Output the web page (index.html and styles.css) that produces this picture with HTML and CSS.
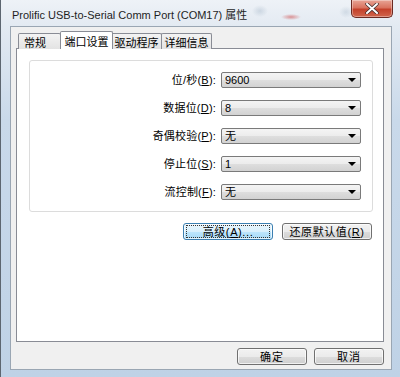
FILE: index.html
```html
<!DOCTYPE html>
<html>
<head>
<meta charset="utf-8">
<link rel="stylesheet" href="styles.css">
</head>
<body>
<div class="window">
  <div class="titlebar">
    <div class="title">Prolific USB-to-Serial Comm Port (COM17) 属性</div>
    <div class="close">
      <svg width="14" height="11" viewBox="0 0 14 11"><path d="M2 1 L12 10 M12 1 L2 10" stroke="#3a2a2a" stroke-width="3.4" stroke-linecap="round"/><path d="M2 1 L12 10 M12 1 L2 10" stroke="#ffffff" stroke-width="2" stroke-linecap="round"/></svg>
    </div>
  </div>
  <div class="client">
    <div class="tabs">
      <div class="tab first">常规</div>
      <div class="tab selected">端口设置</div>
      <div class="tab">驱动程序</div>
      <div class="tab">详细信息</div>
    </div>
    <div class="panel">
      <div class="group">
        <div class="row"><span class="label">位/秒(<u>B</u>):</span><div class="combo"><span>9600</span><i class="arrow"></i></div></div>
        <div class="row"><span class="label">数据位(<u>D</u>):</span><div class="combo"><span>8</span><i class="arrow"></i></div></div>
        <div class="row"><span class="label">奇偶校验(<u>P</u>):</span><div class="combo"><span>无</span><i class="arrow"></i></div></div>
        <div class="row"><span class="label">停止位(<u>S</u>):</span><div class="combo"><span>1</span><i class="arrow"></i></div></div>
        <div class="row"><span class="label">流控制(<u>F</u>):</span><div class="combo"><span>无</span><i class="arrow"></i></div></div>
      </div>
      <div class="actions">
        <div class="btn focus"><span class="focusrect">高级(<u>A</u>)...</span></div>
        <div class="btn">还原默认值(<u>R</u>)</div>
      </div>
    </div>
    <div class="footer">
      <div class="btn small">确定</div>
      <div class="btn small">取消</div>
    </div>
  </div>
</div>
</body>
</html>
```
FILE: styles.css
```css
* { box-sizing: border-box; }
html, body { margin: 0; padding: 0; }
body {
  width: 400px;
  height: 377px;
  overflow: hidden;
  background: #ffffff;
  font-family: "Liberation Sans", "Noto Sans CJK SC", sans-serif;
  font-size: 12px;
  color: #000;
}
.window {
  width: 400px;
  height: 377px;
  background: linear-gradient(to bottom, #eef2f7 0px, #e3eaf2 26px, #c9d9ea 120px, #bfd2e6 377px);
  border-left: 1px solid #5d6670;
  padding: 0 8px 7px 9px;
  display: flex;
  flex-direction: column;
}
.titlebar {
  height: 26px;
  display: flex;
  align-items: flex-start;
  margin-right: -1px;
  background:
    radial-gradient(ellipse 10px 3px at 281px 17px, rgba(205,70,70,0.55), rgba(205,70,70,0) 100%),
    radial-gradient(ellipse 8px 6px at 250px 11px, rgba(150,170,190,0.35), rgba(150,170,190,0) 100%),
    radial-gradient(ellipse 7px 6px at 336px 12px, rgba(150,170,190,0.3), rgba(150,170,190,0) 100%);
}
.title {
  padding-left: 2px;
  padding-top: 8px;
  font-family: "Liberation Sans", "Noto Sans CJK SC", sans-serif;
  font-size: 11px;
  line-height: 14px;
  color: #1e1e1e;
  white-space: nowrap;
}
.close {
  margin-left: auto;
  width: 42px;
  height: 18px;
  border: 1px solid #6b2a22;
  border-top: none;
  border-radius: 0 0 5px 5px;
  background: linear-gradient(to bottom, #e8a596 0%, #d9735f 45%, #c4412b 55%, #d0654c 100%);
  box-shadow: inset 0 0 0 1px rgba(255,255,255,0.35);
  display: flex;
  align-items: center;
  justify-content: center;
}
.client {
  flex: 1;
  background: #f0f0f0;
  border: 1px solid #9aa6b3;
  padding: 4px 7px 0 5px;
  display: flex;
  flex-direction: column;
  font-family: "Liberation Sans", "Noto Sans CJK SC", sans-serif;
}
.tabs {
  display: flex;
  align-items: flex-end;
  height: 18px;
  position: relative;
  z-index: 1;
  margin-bottom: -1px;
}
.tab {
  height: 16px;
  border: 1px solid #898c95;
  border-bottom: none;
  border-radius: 2px 2px 0 0;
  background: linear-gradient(to bottom, #f3f3f3, #e3e3e3);
  font-family: "Noto Sans CJK SC", sans-serif;
  font-size: 11px;
  line-height: 14px;
  padding: 1px 0 0;
  margin-left: -1px;
  color: #000;
  white-space: nowrap;
  text-align: center;
  width: 51px;
}
.tab.first { margin-left: 2px; width: 43px; text-align: left; padding-left: 5px; }
.tab.selected {
  height: 18px;
  background: #ffffff;
  margin-left: -1px;
  margin-right: -1px;
  padding-top: 2px;
  z-index: 2;
  position: relative;
  width: 53px;
}
.panel {
  height: 294px;
  background: #ffffff;
  border: 1px solid #898c95;
  padding: 11px 10px 0 12px;
  display: flex;
  flex-direction: column;
}
.group {
  border: 1px solid #dcdcdc;
  border-radius: 3px;
  height: 152px;
  padding: 11px 11px 0 0;
  display: flex;
  flex-direction: column;
  gap: 12px;
}
.row {
  display: flex;
  align-items: center;
  justify-content: flex-end;
  height: 16px;
}
.label {
  font-size: 11px;
  margin-right: 5px;
  white-space: nowrap;
  line-height: 16px;
  letter-spacing: 0.2px;
}
.label u, .btn u { text-decoration: underline; text-underline-offset: 1px; }
.combo {
  width: 140px;
  height: 16px;
  border: 1px solid #7a7a7a;
  border-radius: 2px;
  background: linear-gradient(to bottom, #f4f4f4 0%, #ececec 50%, #dedede 51%, #d2d2d2 100%);
  display: flex;
  align-items: center;
  padding: 0 4px 0 3px;
  font-family: "Liberation Sans", "Noto Sans CJK SC", sans-serif;
  font-size: 11px;
  line-height: 14px;
}
.combo span { flex: 1; }
.arrow {
  width: 0;
  height: 0;
  border-left: 4px solid transparent;
  border-right: 4px solid transparent;
  border-top: 4px solid #000;
}
.actions {
  display: flex;
  justify-content: flex-end;
  gap: 9px;
  margin-top: 11px;
  padding-right: 1px;
}
.btn {
  width: 90px;
  height: 17px;
  border: 1px solid #707070;
  border-radius: 3px;
  background: linear-gradient(to bottom, #f2f2f2 0%, #ebebeb 50%, #dddddd 51%, #cfcfcf 100%);
  box-shadow: inset 0 0 0 1px rgba(255,255,255,0.7);
  display: flex;
  align-items: center;
  justify-content: center;
  font-size: 11px;
  line-height: 14px;
  letter-spacing: 0.6px;
  white-space: nowrap;
}
.btn.focus {
  border-color: #3c7fb1;
  background: linear-gradient(to bottom, #eaf6fd 0%, #d9f0fc 50%, #bee6fd 51%, #a7d9f5 100%);
}
.focusrect {
  border: 1px dotted #333;
  width: 84px;
  height: 13px;
  display: flex;
  align-items: center;
  justify-content: center;
}
.footer {
  display: flex;
  justify-content: flex-end;
  gap: 7px;
  margin-top: 6px;
}
.btn.small { width: 70px; letter-spacing: 1px; }
```
